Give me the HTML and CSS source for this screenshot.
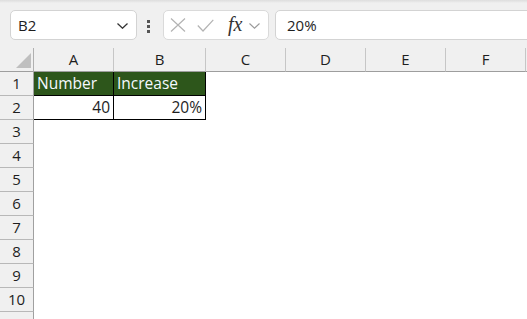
FILE: index.html
```html
<!DOCTYPE html>
<html>
<head>
<meta charset="utf-8">
<link rel="stylesheet" href="styles.css">
</head>
<body>
<div class="toolbar">
  <div class="namebox">
    <span class="nb-text">B2</span>
    <svg class="nb-chev" width="11" height="6" viewBox="0 0 11 6"><polyline points="0.5,0.5 5.5,5.2 10.5,0.5" fill="none" stroke="#333" stroke-width="1.3"/></svg>
  </div>
  <div class="dots"><i></i><i></i><i></i></div>
  <div class="fxbox">
    <svg class="ic-x" width="16" height="14" viewBox="0 0 16 14"><path d="M1 0.5 L15 13.5 M15 0.5 L1 13.5" stroke="#b3b3b3" stroke-width="1.2" fill="none"/></svg>
    <svg class="ic-check" width="17" height="13" viewBox="0 0 17 13"><polyline points="0.8,6.5 6,12 16.3,0.8" fill="none" stroke="#b3b3b3" stroke-width="1.2"/></svg>
    <span class="fx">fx</span>
    <svg class="ic-chev" width="11" height="6" viewBox="0 0 11 6"><polyline points="0.5,0.5 5.5,5.2 10.5,0.5" fill="none" stroke="#9a9a9a" stroke-width="1.1"/></svg>
  </div>
  <div class="formula">20%</div>
</div>
<div class="sheet">
  <div class="ch corner"><span class="tri"></span></div>
  <div class="ch">A</div>
  <div class="ch">B</div>
  <div class="ch">C</div>
  <div class="ch">D</div>
  <div class="ch">E</div>
  <div class="ch">F</div>
  <div class="ch fill"></div>

  <div class="rh">1</div>
  <div class="c g">Number</div>
  <div class="c g">Increase</div>
  <div class="c"></div><div class="c"></div><div class="c"></div><div class="c"></div><div class="c"></div>

  <div class="rh">2</div>
  <div class="c b num">40</div>
  <div class="c b num">20%</div>
  <div class="c"></div><div class="c"></div><div class="c"></div><div class="c"></div><div class="c"></div>

  <div class="rh">3</div><div class="c"></div><div class="c"></div><div class="c"></div><div class="c"></div><div class="c"></div><div class="c"></div><div class="c"></div>
  <div class="rh">4</div><div class="c"></div><div class="c"></div><div class="c"></div><div class="c"></div><div class="c"></div><div class="c"></div><div class="c"></div>
  <div class="rh">5</div><div class="c"></div><div class="c"></div><div class="c"></div><div class="c"></div><div class="c"></div><div class="c"></div><div class="c"></div>
  <div class="rh">6</div><div class="c"></div><div class="c"></div><div class="c"></div><div class="c"></div><div class="c"></div><div class="c"></div><div class="c"></div>
  <div class="rh">7</div><div class="c"></div><div class="c"></div><div class="c"></div><div class="c"></div><div class="c"></div><div class="c"></div><div class="c"></div>
  <div class="rh">8</div><div class="c"></div><div class="c"></div><div class="c"></div><div class="c"></div><div class="c"></div><div class="c"></div><div class="c"></div>
  <div class="rh">9</div><div class="c"></div><div class="c"></div><div class="c"></div><div class="c"></div><div class="c"></div><div class="c"></div><div class="c"></div>
  <div class="rh">10</div><div class="c"></div><div class="c"></div><div class="c"></div><div class="c"></div><div class="c"></div><div class="c"></div><div class="c"></div>
  <div class="rh">11</div><div class="c"></div><div class="c"></div><div class="c"></div><div class="c"></div><div class="c"></div><div class="c"></div><div class="c"></div>
</div>
</body>
</html>
```
FILE: styles.css
```css
html, body {
  margin: 0;
  padding: 0;
  background: #ffffff;
  overflow: hidden;
}
body {
  width: 527px;
  height: 319px;
  font-family: "Open Sans", "Liberation Sans", sans-serif;
  color: #1e1e1e;
}
.toolbar {
  height: 48px;
  box-sizing: border-box;
  background: linear-gradient(#dedede 0, #e9e9e9 2px, #f0f0f0 3px, #f0f0f0 100%);
  padding: 10px 0 0 10px;
  display: flex;
  align-items: flex-start;
}
.namebox {
  width: 127px;
  height: 30px;
  box-sizing: border-box;
  background: #fff;
  border: 1px solid #d3d3d3;
  border-radius: 5px;
  display: flex;
  align-items: center;
  padding: 0 8px 0 7px;
}
.nb-text {
  font-size: 15px;
  flex: 1;
}
.nb-chev {
  margin-top: 1px;
}
.dots {
  margin-left: 10px;
  margin-top: 10px;
  display: flex;
  flex-direction: column;
  gap: 2px;
}
.dots i {
  display: block;
  width: 3px;
  height: 3px;
  background: #555;
}
.fxbox {
  margin-left: 13px;
  width: 106px;
  height: 30px;
  box-sizing: border-box;
  background: #fff;
  border: 1px solid #dadada;
  border-radius: 5px;
  display: flex;
  align-items: center;
  padding-left: 6px;
}
.ic-x { margin-top: 0; }
.ic-check { margin-left: 11px; }
.fx {
  margin-left: 14px;
  font-family: "Liberation Serif", "DejaVu Serif", serif;
  font-style: italic;
  font-size: 20px;
  color: #333;
  line-height: 1;
  margin-top: -2px;
}
.ic-chev { margin-left: 7px; margin-top: 2px; }
.formula {
  margin-left: 6px;
  flex: 1;
  margin-right: -10px;
  height: 30px;
  box-sizing: border-box;
  background: #fff;
  border: 1px solid #d3d3d3;
  border-radius: 5px;
  font-size: 15px;
  line-height: 28px;
  padding-left: 11px;
}
.sheet {
  display: grid;
  grid-template-columns: 34px 80px 92px 80px 80px 80px 80px 1fr;
  grid-auto-rows: 24px;
}
.sheet > div {
  box-sizing: border-box;
}
.ch {
  background: #f0f0f0;
  border-right: 1px solid #c6c6c6;
  border-bottom: 1px solid #9e9e9e;
  text-align: center;
  font-size: 15px;
  line-height: 22px;
  color: #1e1e1e;
}
.ch.fill { border-right: none; }
.corner {
  border-right-color: #b0b0b0;
  display: flex;
  justify-content: flex-end;
  align-items: flex-end;
  padding: 0 2px 3px 0;
}
.tri {
  display: block;
  width: 15px;
  height: 15px;
  background: #bfbfbf;
  clip-path: polygon(100% 0, 100% 100%, 0 100%);
}
.rh {
  background: #f0f0f0;
  border-right: 1px solid #a0a0a0;
  border-bottom: 1px solid #b8b8b8;
  text-align: center;
  font-size: 15px;
  line-height: 23px;
  color: #1e1e1e;
}
.c {
  border-right: 1px solid transparent;
  border-bottom: 1px solid transparent;
  padding: 0 3px;
  font-size: 15.5px;
  line-height: 23px;
  white-space: nowrap;
  overflow: hidden;
}
.g {
  background: #2d561b;
  color: #f6f9ff;
  border-right-color: #000;
  border-bottom-color: #000;
}
.b {
  border-right-color: #000;
  border-bottom-color: #000;
}
.num { text-align: right; }
```
